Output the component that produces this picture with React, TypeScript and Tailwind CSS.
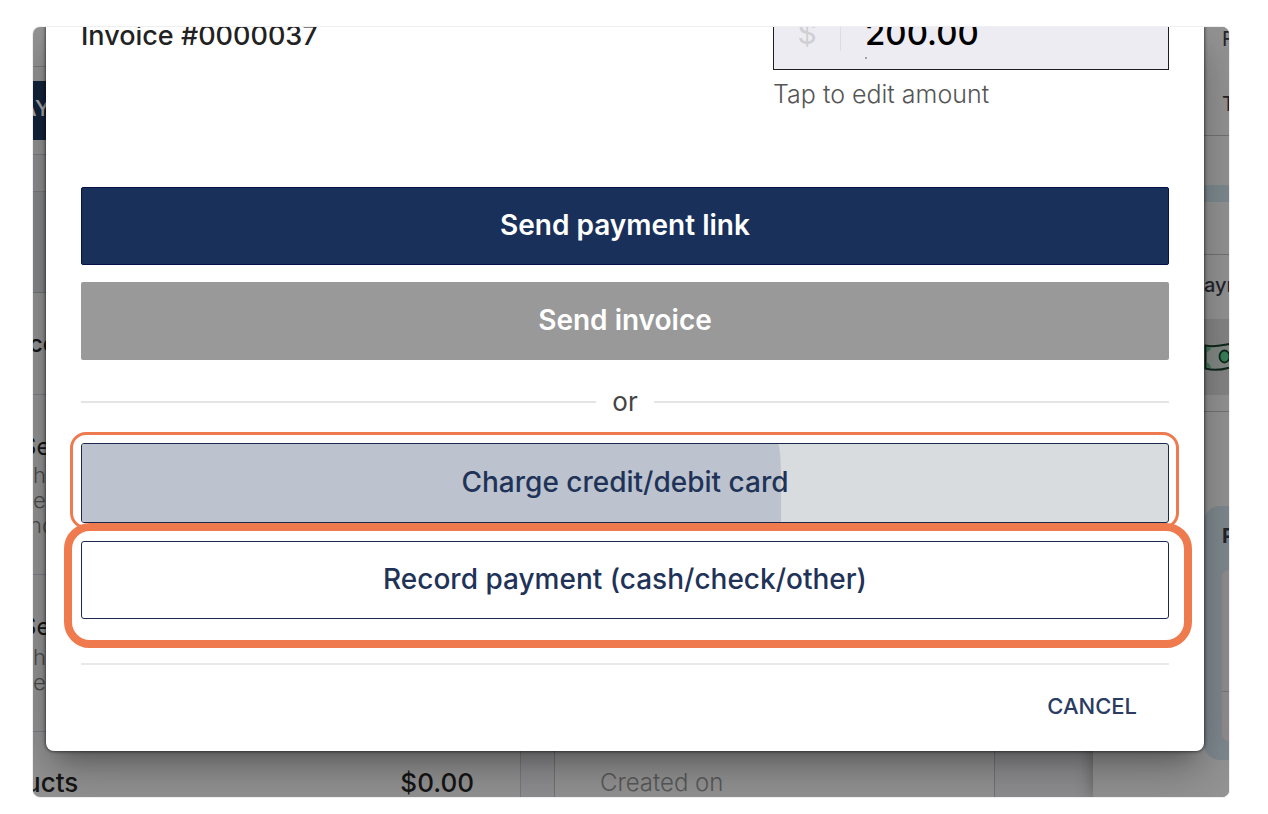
import type { ReactNode } from "react";

function LeftColumn() {
  return (
    <div className="flex w-[488px] shrink-0 flex-col border-r border-[#7c7c7c] text-[#161616]">
      <div className="h-10 border-b border-[#7c7c7c]" />
      <div className="mt-[14px] flex h-[59px] items-center bg-[#14243c] pb-1 text-[22px] font-medium text-[#a9a9a9]">
        <span className="-ml-3">AY</span>
      </div>
      <div className="mt-[14px] h-[38px] border-y border-[#7c7c7c] bg-[#909092]" />
      <div className="h-[101px] border-b border-[#747474] bg-[#88898c]" />
      <div className="flex h-[102px] items-center border-b border-[#7c7f86] text-2xl font-medium">
        <span className="-ml-1">ce</span>
      </div>
      <div className="h-[180px] border-b border-[#7c7f86] pt-9">
        <p className="-ml-3 text-2xl/8">Se</p>
        <p className="text-[22px]/[25px] font-light text-[#4b4b4b]">h</p>
        <p className="text-[22px]/[25px] font-light text-[#4b4b4b]">e</p>
        <p className="-ml-1 text-[22px]/[25px] font-light text-[#4b4b4b]">no</p>
      </div>
      <div className="h-[157px] border-b border-[#7c7f86] pt-9">
        <p className="-ml-3 text-2xl/8">Se</p>
        <p className="mt-[2px] text-[22px]/[25px] font-light text-[#4b4b4b]">h</p>
        <p className="text-[22px]/[25px] font-light text-[#4b4b4b]">e</p>
      </div>
      <div className="flex flex-1 items-end justify-between pr-[46px] text-[26px]/7 font-medium">
        <span className="-ml-2">ucts</span>
        <span>$0.00</span>
      </div>
    </div>
  );
}

function CashIcon() {
  return (
    <svg className="h-7 w-12 shrink-0" viewBox="0 0 48 28" fill="none" aria-hidden="true">
      <path
        d="M1.5 2.5C10 4.5 17 2.5 24 1.2C32 -.2 39 .5 46 2V25C38 23 31 23 24 25C16 27.3 9 27.5 1.5 25.5Z"
        fill="#848b87"
        stroke="#10281c"
        strokeWidth="2"
        strokeLinejoin="round"
      />
      <path d="M3 4V9C5 8 6.5 6.5 7 4.5ZM3 24.5V19.5C5 20.5 6.5 22 7 25Z" fill="#3c7a58" />
      <ellipse cx="20.500" cy="13.500" rx="5" ry="6" fill="#39805a" stroke="#10281c" strokeWidth="1.8" />
    </svg>
  );
}

function RightPanel() {
  return (
    <div className="flex w-[136px] shrink-0 flex-col bg-[#959595] pl-[111px] text-[#22252c] shadow-[0_0_16px_0_rgba(0,0,0,0.35)]">
      <div className="flex h-[109px] flex-col gap-[41px] border-b border-[#747474] pl-[18px] text-xl/6">
        <span>F</span>
        <span>T</span>
      </div>
      <div className="mt-[49px] h-[17px] bg-[#7f8b91]" />
      <div className="h-[53px] border-b border-[#747474]" />
      <div className="flex h-16 items-center pb-1 text-xl font-medium">
        <span>ayn</span>
      </div>
      <div className="flex h-[76px] items-center overflow-hidden bg-[#868686]">
        <CashIcon />
      </div>
      <div className="h-[17px] border-b border-[#747474]" />
      <div className="mt-[94px] h-[254px] rounded-l-2xl bg-[#808a90] pt-4 pl-[18px]">
        <p className="text-xl/7 font-bold">P</p>
        <div className="mt-5 h-[171px] rounded-l-lg bg-[#938f91] pt-[121px]">
          <div className="border-t border-[#777777]" />
        </div>
      </div>
    </div>
  );
}

function Backdrop() {
  return (
    <div className="absolute inset-0 flex overflow-hidden bg-[#959595]">
      <LeftColumn />
      <div className="flex flex-1 bg-[#919194] pl-[33px]">
        <div className="flex w-[441px] items-end border-x border-[#747474] bg-[#959595] pl-[45px]">
          <span className="text-2xl/7 font-light text-[#5a5a5a]">Created on</span>
        </div>
      </div>
      <RightPanel />
    </div>
  );
}

function SolidButton({ color, children }: { color: string; children: ReactNode }) {
  return (
    <button type="button" className={`h-[78px] w-full rounded-xs pb-[2px] text-[28px] font-semibold text-white ${color}`}>
      {children}
    </button>
  );
}

function PaymentDialog() {
  return (
    <section
      role="dialog"
      aria-label="Collect payment"
      className="relative mr-[25px] ml-[13px] rounded-b-lg bg-white px-[35px] pb-6 shadow-[0_0_3px_1px_rgba(0,0,0,0.5),0_17px_23px_-11px_rgba(0,0,0,0.3),0_20px_56px_5px_rgba(0,0,0,0.22)]"
    >
      <div className="flex items-start justify-between">
        <h1 className="-mt-[9px] text-[27px]/9 font-medium text-[#222222]">Invoice #0000037</h1>
        <div className="-mt-8 w-[396px]">
          <div className="relative flex h-[75px] items-center border border-[#1d1d22] bg-[#edecf2]">
            <label
              htmlFor="amount"
              className="w-[67px] shrink-0 border-r border-[#dcdce2] text-center text-3xl/9 text-[#cfcfd4]"
            >
              $
            </label>
            <input
              id="amount"
              defaultValue="200.00"
              className="w-full min-w-0 bg-transparent pl-6 text-[33px]/9 font-medium text-black outline-none"
            />
            <span className="absolute bottom-[10px] left-[91px] size-[2px] rounded-full bg-[#8a8a90]" />
          </div>
          <p className="mt-2 text-[25px]/8 font-light text-[#555555]">Tap to edit amount</p>
        </div>
      </div>

      <div className="mt-[77px] flex flex-col gap-[17px]">
        <SolidButton color="bg-[#19305a] border border-[#06104a]">Send payment link</SolidButton>
        <SolidButton color="bg-[#999999]">Send invoice</SolidButton>
      </div>

      <div className="my-[25px] flex h-[33px] items-center gap-4 text-[26px] text-[#444444]">
        <span className="h-[2px] flex-1 bg-[#e4e4e4]" />
        <span>or</span>
        <span className="h-[2px] flex-1 bg-[#e4e4e4]" />
      </div>

      <div className="flex flex-col gap-[18px] text-[28px] font-medium text-[#1f3358]">
        <div className="relative">
          <button
            type="button"
            className="relative h-20 w-full overflow-hidden rounded-[3px] border border-[#1b2a4c] bg-[#d8dcdf] pb-[2px]"
          >
            <span className="absolute inset-y-0 left-0 w-[699px] rounded-tr-[3px_36px] bg-[#bcc3ce]" />
            <span className="relative">Charge credit/debit card</span>
          </button>
          <span className="pointer-events-none absolute -top-[11px] -right-[10px] -bottom-[6px] -left-[11px] rounded-2xl border-[3px] border-[#ee7b50]" />
        </div>
        <div className="relative">
          <button type="button" className="h-[78px] w-full rounded-[3px] border border-[#1b2a4c] bg-white pb-[2px]">
            Record payment (cash/check/other)
          </button>
          <span className="pointer-events-none absolute -top-[18px] -right-[23px] -bottom-[29px] -left-[17px] rounded-[26px] border-8 border-[#ee7a4d]" />
        </div>
      </div>

      <div className="mt-11 flex justify-end border-t-2 border-[#e9e9e9] pt-[22px] pr-8">
        <button type="button" className="h-10 pb-[2px] text-[22px] font-medium text-[#2a3c62]">
          CANCEL
        </button>
      </div>
    </section>
  );
}

export default function App() {
  return (
    <main className="min-h-screen bg-white pt-[26px] pr-[38px] pb-4 pl-8 font-['Inter','Open_Sans',sans-serif]">
      <div className="relative overflow-hidden rounded-lg border border-[#efeff1] pb-[46px]">
        <Backdrop />
        <PaymentDialog />
      </div>
    </main>
  );
}
